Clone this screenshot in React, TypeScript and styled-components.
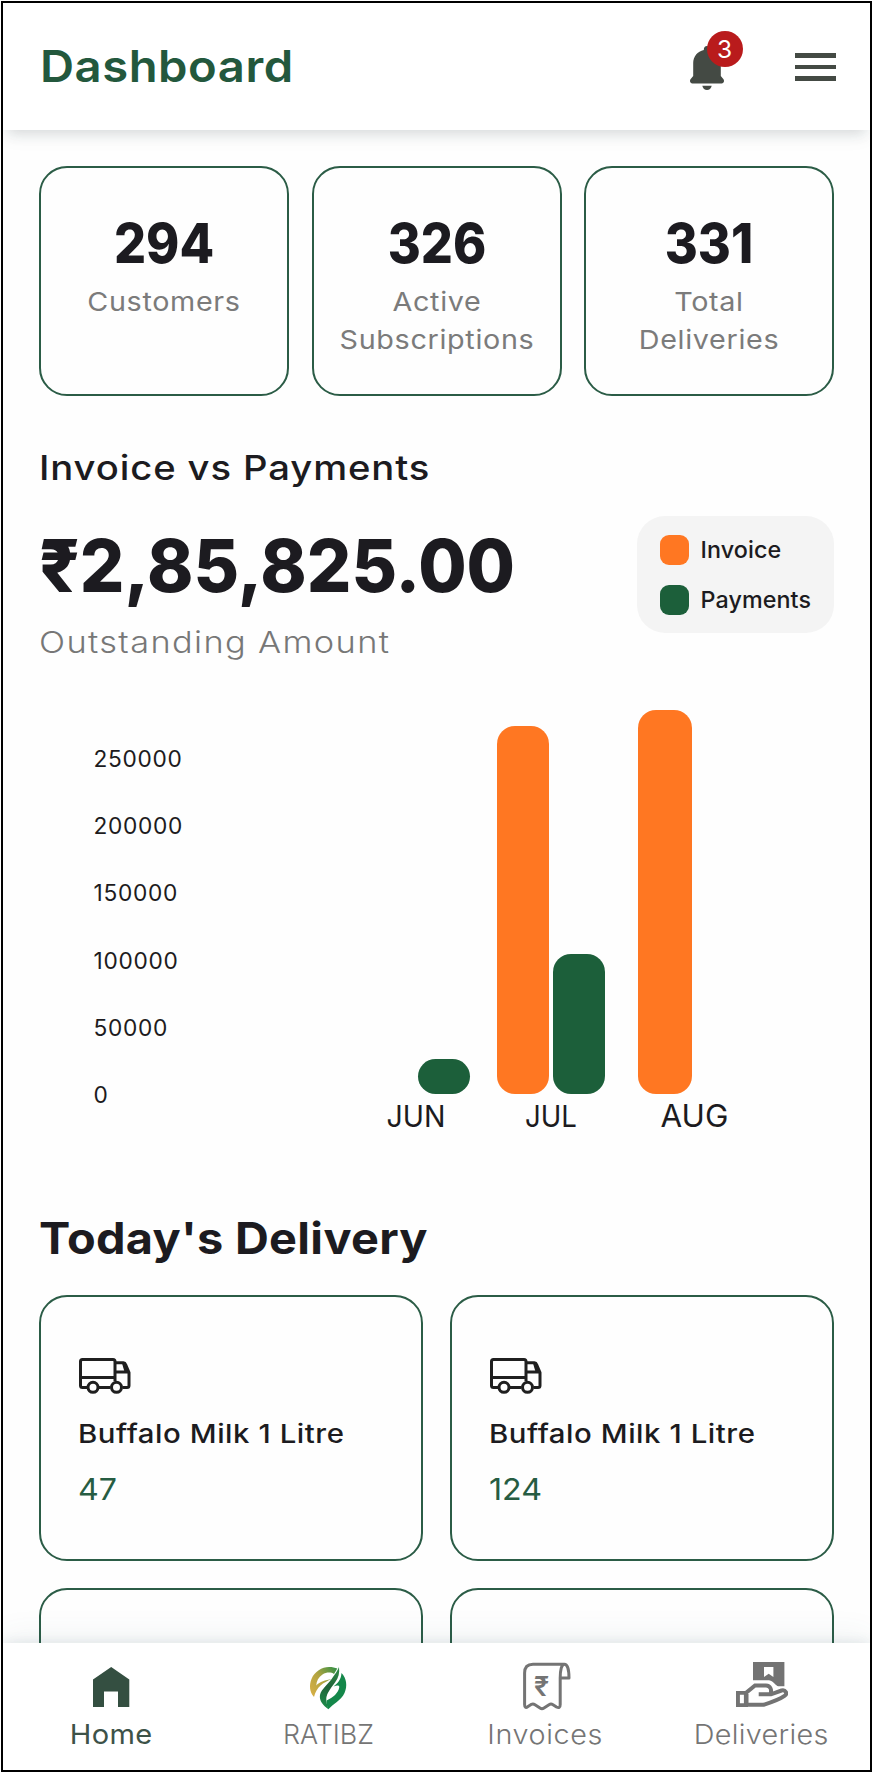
import React from 'react';
import styled, { createGlobalStyle } from 'styled-components';

const GREEN = '#1c5f3a';
const ORANGE = '#ff7722';
const INK = '#1c1b20';
const MUTED = '#7b7b7b';
const OUTLINE = '#2b5c46';

const GlobalStyle = createGlobalStyle`
  * { box-sizing: border-box; }
  html, body { margin: 0; padding: 0; background: #fff; }
  body { font-family: Inter, "Liberation Sans", sans-serif; color: ${INK}; }
`;

const Frame = styled.div`
  width: 871px;
  height: 1771px;
  margin: 1px;
  border: 2px solid #000;
  background: #fefefe;
  display: flex;
  flex-direction: column;
  overflow: hidden;
`;

const Header = styled.header`
  position: relative;
  z-index: 1;
  flex: 0 0 127px;
  display: flex;
  align-items: center;
  padding: 1px 34.5px 0 37px;
  background: #fff;
  box-shadow: 0 9px 12px -5px rgba(50, 70, 75, 0.16), 0 6px 22px rgba(50, 70, 75, 0.04);
`;

const PageTitle = styled.h1`
  flex: 1;
  margin: 0;
  font-size: 43.8px;
  line-height: 60px;
  font-weight: 600;
  letter-spacing: 0.5px;
  transform: scaleX(1.077);
  transform-origin: left;
  color: #23583d;
`;

const BellButton = styled.div`
  position: relative;
  width: 34px;
  height: 44px;
  margin: 2px 71px 0 0;
  svg { display: block; }
`;

const Badge = styled.span`
  position: absolute;
  left: 17px;
  top: -15.5px;
  width: 36px;
  height: 36px;
  border-radius: 50%;
  background: #b91b1c;
  color: #fff;
  font-size: 24.5px;
  line-height: 36px;
  text-align: center;
`;

const MenuButton = styled.div`
  width: 41px;
  display: flex;
  flex-direction: column;
  gap: 6.8px;
`;

const MenuLine = styled.span`
  height: 4.5px;
  background: #444a44;
`;

const Content = styled.main`
  flex: 1 1 0;
  min-height: 0;
  overflow: hidden;
  padding: 36px 36px 0;
`;

const StatRow = styled.section`
  display: grid;
  grid-template-columns: repeat(3, 1fr);
  gap: 22.5px;
`;

const StatCard = styled.div`
  height: 230px;
  padding: 43px 16px 0;
  border: 2px solid ${OUTLINE};
  border-radius: 28px;
  text-align: center;
`;

const StatValue = styled.div`
  font-size: 54.8px;
  line-height: 64px;
  font-weight: 800;
  transform: scaleX(0.92);
`;

const StatLabel = styled.div`
  margin-top: 8px;
  font-size: 26px;
  line-height: 38px;
  letter-spacing: 0.6px;
  transform: scaleX(1.105);
  color: ${MUTED};
`;

const SectionTitle = styled.h2`
  margin: 51.5px 0 0;
  font-size: 34.2px;
  line-height: 40px;
  font-weight: 500;
  letter-spacing: 0.8px;
  transform: scaleX(1.118);
  transform-origin: left;
`;

const Summary = styled.section`
  display: flex;
  justify-content: space-between;
  align-items: flex-start;
  margin-top: 28.5px;
`;

const Amount = styled.div`
  margin-top: 10px;
  font-size: 73.2px;
  line-height: 80px;
  font-weight: 760;
  transform: scaleX(0.957);
  transform-origin: left;
`;

const AmountLabel = styled.div`
  margin-top: 16px;
  font-size: 29.9px;
  line-height: 40px;
  font-weight: 300;
  letter-spacing: 1.2px;
  transform: scaleX(1.148);
  transform-origin: left;
  color: #777;
`;

const Legend = styled.div`
  width: 197px;
  height: 117px;
  padding: 19px 0 0 22.5px;
  border-radius: 28px;
  background: #f4f4f4;
  display: flex;
  flex-direction: column;
  gap: 20.5px;
`;

const LegendItem = styled.div`
  display: flex;
  align-items: center;
  gap: 11.5px;
  height: 29.5px;
  font-size: 23.3px;
  font-weight: 550;
  letter-spacing: 0.1px;
`;

const Swatch = styled.span<{ $color: string }>`
  width: 29.5px;
  height: 29.5px;
  border-radius: 9px;
  background: ${p => p.$color};
`;

const Chart = styled.section`
  display: flex;
  align-items: flex-start;
  margin-top: 47.5px;
  padding-left: 54.5px;
`;

const Axis = styled.div`
  width: 268px;
  margin-top: 15px;
`;

const Tick = styled.div`
  height: 67.4px;
  line-height: 67.4px;
  font-size: 22.7px;
  letter-spacing: 0.7px;
`;

const Plot = styled.div`
  display: flex;
`;

const Month = styled.div<{ $lead: number; $wide: boolean }>`
  width: ${p => (p.$wide ? 113 : 108)}px;
  margin-left: ${p => p.$lead}px;
`;

const Bars = styled.div`
  height: 384.5px;
  display: flex;
  align-items: flex-end;
  gap: 4px;
`;

const Bar = styled.div<{ $color: string; $wide?: boolean }>`
  flex: 0 0 ${p => (p.$wide ? 54 : 52)}px;
  border-radius: 18px;
  background: ${p => p.$color};
`;

const MonthLabel = styled.div<{ $stretch: number; $size: number }>`
  margin-top: 7px;
  text-align: center;
  font-size: ${p => p.$size}px;
  line-height: 30px;
  transform: scaleX(${p => p.$stretch});
`;

const DeliveryTitle = styled(SectionTitle)`
  margin: 83px 0 0;
  font-size: 43.8px;
  line-height: 50px;
  font-weight: 700;
  letter-spacing: 0.3px;
  transform: scaleX(1.07);
`;

const DeliveryGrid = styled.section`
  margin-top: 31px;
  display: grid;
  grid-template-columns: repeat(2, 1fr);
  gap: 27.5px;
`;

const DeliveryCard = styled.div`
  height: 265.5px;
  padding: 61px 0 0 36.5px;
  border: 2px solid ${OUTLINE};
  border-radius: 28px;
  svg { display: block; margin-left: 1.5px; }
`;

const ProductName = styled.div`
  margin-top: 22px;
  font-size: 26px;
  line-height: 36px;
  font-weight: 500;
  letter-spacing: 0.5px;
  transform: scaleX(1.13);
  transform-origin: left;
`;

const ProductCount = styled.div`
  margin-top: 16.5px;
  font-size: 30.1px;
  line-height: 40px;
  transform: scaleX(1.07);
  transform-origin: left;
  color: #265c42;
`;

const Nav = styled.nav`
  position: relative;
  flex: 0 0 127.5px;
  display: flex;
  padding-top: 18px;
  background: #fff;
  box-shadow: 0 -2px 10px rgba(70, 100, 110, 0.1), 0 -6px 30px rgba(70, 100, 110, 0.08);
`;

const NavItem = styled.div<{ $active?: boolean }>`
  flex: 1;
  display: flex;
  flex-direction: column;
  align-items: center;
  gap: 6px;
  font-size: 27.4px;
  line-height: 34px;
  font-weight: ${p => (p.$active ? 400 : 300)};
  color: ${p => (p.$active ? '#3d5248' : '#757575')};
`;

const NavLabel = styled.span<{ $track: number; $stretch: number }>`
  letter-spacing: ${p => p.$track}px;
  transform: scaleX(${p => p.$stretch});
`;

const Bell = () => (
  <svg width="34" height="44" viewBox="0 0 34 44" fill="#444a44">
    <path d="M17 0c-2 0-3.2 1.5-3.2 4C7.500 5.400 3.200 10.500 3.200 17v13L.7 33C-.8 35 .2 37.500 2.400 37.500h29.200c2.200 0 3.200-2.500 1.700-4.500l-2.500-3V17c0-6.500-4.300-11.600-10.600-13 0-2.500-1.200-4-3.200-4z" />
    <path d="M12.300 39.700h9.400c-.6 2.800-2.300 4.300-4.700 4.300s-4.100-1.500-4.700-4.300z" />
  </svg>
);

const Truck = () => (
  <svg width="52" height="36" viewBox="0 0 52 36" fill="none" stroke="#1f1f1f" strokeWidth="3" strokeLinejoin="round">
    <path d="M8 29.500H3.500Q1.500 29.500 1.500 27.500V3.500Q1.500 1.500 3.500 1.500H34Q36 1.500 36 3.500V23" />
    <path d="M1.500 19.500H36M19.500 29.500h12" />
    <path d="M36 4.800h8.500q1.500 0 2 1.500L50 14.500V27.500q0 2-2 2h-4.500M36 14h13.500" />
    <path d="M44.500 5l2.500 8.500" />
    <circle cx="14" cy="29.300" r="5" />
    <circle cx="37.500" cy="29.300" r="5" />
  </svg>
);

const HomeIcon = () => (
  <svg width="52" height="50" viewBox="0 0 52 50">
    <path d="M26.200 6L44.300 18.500v27.500H33V30.500H19v15.500H8V18.500z" fill="#344f41" />
  </svg>
);

const RatibzIcon = () => (
  <svg width="52" height="50" viewBox="0 0 52 50">
    <defs>
      <linearGradient id="gold" x1="8" y1="30" x2="36" y2="8" gradientUnits="userSpaceOnUse">
        <stop offset="0" stopColor="#d3ae45" />
        <stop offset="0.450" stopColor="#b3a440" />
        <stop offset="1" stopColor="#2f8f45" />
      </linearGradient>
      <linearGradient id="road" x1="36" y1="8" x2="22" y2="46" gradientUnits="userSpaceOnUse">
        <stop offset="0" stopColor="#2f8a45" />
        <stop offset="0.500" stopColor="#1f6238" />
        <stop offset="1" stopColor="#1d8a49" />
      </linearGradient>
    </defs>
    <path d="M12 36C7.500 31 7 24 9.500 18C12.500 10.500 20 6 27 6C30.500 6 33 6.600 35.300 7.600L32 13C29 11 24.500 11 20.500 13.500C16.500 16 14.500 20 14.300 24.500C18 20.500 23 19 30 18C21 21.500 14.500 26 12 36Z" fill="url(#gold)" />
    <path d="M37 6C37.800 12 36.500 17 33 21.500C28.500 27.500 25 32 24.300 37C24 41 25.300 44.500 26.500 48.300C21 44.500 17 39.500 18 34C19.200 28 27 22.500 31 16C33 13 35.500 10 37 6Z" fill="url(#road)" />
    <path d="M39.500 12C44.500 17 45.700 25 42.500 32C39 39.500 31 43 26.300 48.300C24.800 45 24.300 42 24.600 39.500C31 36.500 36.500 32 37.300 26C37.300 24 35 24 31.500 25.500C35.500 22.500 39 19 39.500 12Z" fill="#14874a" />
  </svg>
);

const InvoiceIcon = () => (
  <svg width="52" height="50" viewBox="0 0 52 50" fill="none" stroke="#747474" strokeWidth="3" strokeLinejoin="round" strokeLinecap="round">
    <path d="M45.500 3.200H14Q5.600 3.200 5.600 12V43.500Q5.600 48 9 45.500L12.500 43.300Q14.200 42.500 16 43.700L21 47Q23 48.300 25 47L30 43.700Q32 42.500 34 43.700L37.500 46Q41.200 48 41.200 43.500V17C41.200 9 42.500 3.200 45.500 3.200C48.500 3.200 50 9 50 17H41.200" />
    <text x="15" y="34.500" fontFamily="Inter, sans-serif" fontSize="27" fontWeight="600" fill="#747474" stroke="none" letterSpacing="0">₹</text>
  </svg>
);

const DeliveryIcon = () => (
  <svg width="52" height="50" viewBox="0 0 52 50">
    <path d="M17 1H48.400V25.300H42.400C39.500 25 38 20 33 19.300H17ZM28 6V16L32.700 12.700L37.400 16V6Z" fill="#737373" fillRule="evenodd" />
    <path d="M0 30H12V46H0ZM3.900 33.700V42.300H7.900V33.700Z" fill="#737373" fillRule="evenodd" />
    <path d="M10.500 43.800V31.500L19 24.500H30C34.500 24.500 36 29 34.500 32.800M22.700 33.300H35L45.500 29.500C49.500 28.500 52 32.500 48.500 34.800C44 38 36 41 27.500 43.800H10.500" fill="none" stroke="#737373" strokeWidth="4" />
  </svg>
);

const stats = [
  { value: '294', label: 'Customers' },
  { value: '326', label: 'Active Subscriptions' },
  { value: '331', label: 'Total Deliveries' },
];

const ticks = ['250000', '200000', '150000', '100000', '50000', '0'];
const PX_PER_UNIT = 67.4 / 50000;

const months = [
  { name: 'JUN', invoice: 0, payments: 25900, stretch: 0.95, size: 30, lead: 0 },
  { name: 'JUL', invoice: 272700, payments: 103500, stretch: 0.92, size: 30, lead: 27.5 },
  { name: 'AUG', invoice: 285100, payments: 0, stretch: 1.02, size: 30.8, lead: 32.5 },
];

const deliveries = [
  { name: 'Buffalo Milk 1 Litre', count: '47' },
  { name: 'Buffalo Milk 1 Litre', count: '124' },
];

export default function App() {
  return (
    <>
      <GlobalStyle />
      <Frame>
        <Header>
          <PageTitle>Dashboard</PageTitle>
          <BellButton>
            <Bell />
            <Badge>3</Badge>
          </BellButton>
          <MenuButton>
            <MenuLine />
            <MenuLine />
            <MenuLine />
          </MenuButton>
        </Header>
        <Content>
          <StatRow>
            {stats.map(s => (
              <StatCard key={s.label}>
                <StatValue>{s.value}</StatValue>
                <StatLabel>
                  {s.label.split(' ').map(word => (
                    <div key={word}>{word}</div>
                  ))}
                </StatLabel>
              </StatCard>
            ))}
          </StatRow>
          <SectionTitle>Invoice vs Payments</SectionTitle>
          <Summary>
            <div>
              <Amount>₹2,85,825.00</Amount>
              <AmountLabel>Outstanding Amount</AmountLabel>
            </div>
            <Legend>
              <LegendItem><Swatch $color={ORANGE} />Invoice</LegendItem>
              <LegendItem><Swatch $color={GREEN} />Payments</LegendItem>
            </Legend>
          </Summary>
          <Chart>
            <Axis>
              {ticks.map(t => <Tick key={t}>{t}</Tick>)}
            </Axis>
            <Plot>
              {months.map(m => (
                <Month key={m.name} $lead={m.lead} $wide={!m.payments}>
                  <Bars>
                    <Bar $color={ORANGE} $wide={!m.payments} style={{ height: m.invoice * PX_PER_UNIT }} />
                    <Bar $color={GREEN} style={{ height: m.payments * PX_PER_UNIT }} />
                  </Bars>
                  <MonthLabel $stretch={m.stretch} $size={m.size}>{m.name}</MonthLabel>
                </Month>
              ))}
            </Plot>
          </Chart>
          <DeliveryTitle>Today's Delivery</DeliveryTitle>
          <DeliveryGrid>
            {deliveries.map(d => (
              <DeliveryCard key={d.count}>
                <Truck />
                <ProductName>{d.name}</ProductName>
                <ProductCount>{d.count}</ProductCount>
              </DeliveryCard>
            ))}
            <DeliveryCard />
            <DeliveryCard />
          </DeliveryGrid>
        </Content>
        <Nav>
          <NavItem $active><HomeIcon /><NavLabel $track={0.4} $stretch={1.06}>Home</NavLabel></NavItem>
          <NavItem><RatibzIcon /><NavLabel $track={0} $stretch={0.98}>RATIBZ</NavLabel></NavItem>
          <NavItem><InvoiceIcon /><NavLabel $track={0.6} $stretch={1.05}>Invoices</NavLabel></NavItem>
          <NavItem><DeliveryIcon /><NavLabel $track={0.3} $stretch={1.05}>Deliveries</NavLabel></NavItem>
        </Nav>
      </Frame>
    </>
  );
}
